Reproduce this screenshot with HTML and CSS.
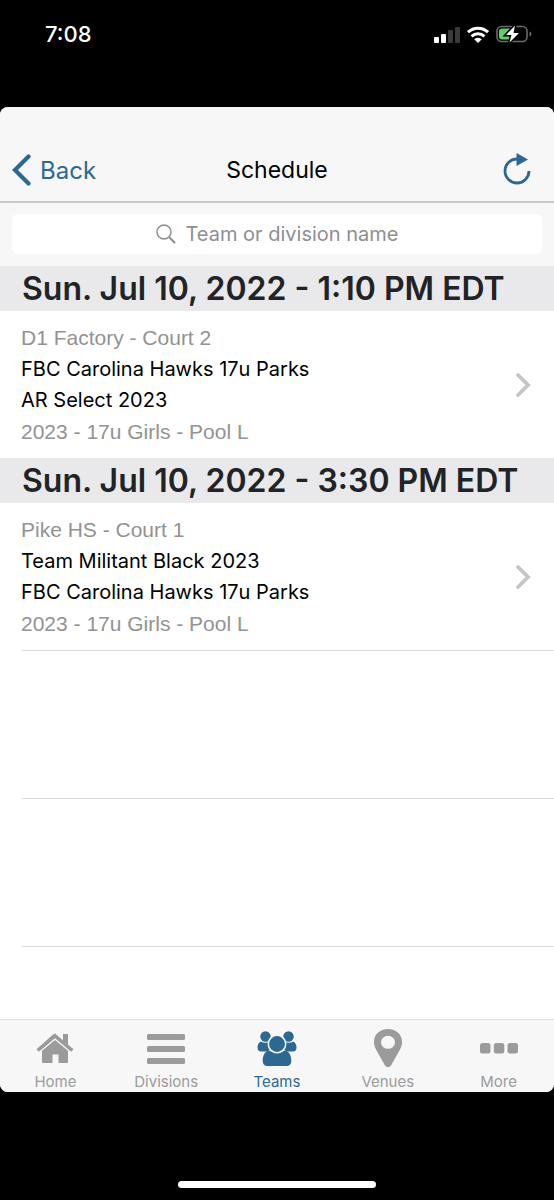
FILE: index.html
```html
<!doctype html>
<html lang="en">
  <head>
    <meta charset="UTF-8" />
    <meta
      name="viewport"
      content="width=device-width, initial-scale=1.0" />
    <title>Schedule</title>
    <link rel="stylesheet" href="styles.css">
  </head>
  <body>
    <!-- Phone status bar -->
    <div class="status-bar">
      <span class="clock">7:08</span>
      <div class="status-icons">
        <svg width="26" height="17" viewBox="0 0 26 17">
          <rect x="0" y="11" width="5" height="6" rx="1" fill="#fff" />
          <rect x="7" y="8" width="5" height="9" rx="1" fill="#fff" />
          <rect x="14" y="4" width="5" height="13" rx="1" fill="#3a3a3a" />
          <rect x="21" y="1" width="5" height="16" rx="1" fill="#3a3a3a" />
        </svg>
        <svg width="22" height="17" viewBox="0 0 22 17">
          <g fill="none" stroke="#fff" stroke-width="3">
            <path d="M1 6.200a14.400 14.400 0 0 1 20 0" />
            <path d="M4.600 10.400a9.200 9.200 0 0 1 12.800 0" />
          </g>
          <path d="M7.200 13.200a5.400 5.400 0 0 1 7.600 0L11 17z" fill="#fff" />
        </svg>
        <svg width="36" height="18" viewBox="0 0 36 18">
          <rect x="1" y="1.500" width="30" height="15" rx="4.500" fill="none" stroke="#6c6c6c" stroke-width="1.600" />
          <path d="M33.500 6.500q2 .7 2 2.500t-2 2.500z" fill="#6c6c6c" />
          <path d="M6 3.500h8v11H6a3 3 0 0 1-3-3v-5a3 3 0 0 1 3-3z" fill="#62cd68" />
          <path d="M19 .5L10 10h5.500L13.500 17.500L23 8h-5.500z" fill="#fff" stroke="#000" stroke-width="3" paint-order="stroke" />
        </svg>
      </div>
    </div>

    <div class="app">
      <header class="nav-bar">
        <a class="back" href="#">
          <svg width="20" height="32" viewBox="0 0 20 32">
            <path d="M16.500 2.500L3 16l13.500 13.500" fill="none" stroke="currentColor" stroke-width="4.200" stroke-linecap="round" />
          </svg>
          Back
        </a>
        <h1>Schedule</h1>
        <button class="refresh" type="button" aria-label="Refresh">
          <svg width="28" height="32" viewBox="0 0 28 32">
            <path d="M14 6A12 12 0 1 0 26 18" fill="none" stroke="currentColor" stroke-width="2.800" />
            <path d="M13.500 0L25 6.500L13.500 13z" fill="currentColor" />
          </svg>
        </button>
      </header>

      <form class="search">
        <label class="search-box">
          <svg width="20" height="20" viewBox="0 0 20 20">
            <circle cx="8" cy="8" r="7" fill="none" stroke="currentColor" stroke-width="1.500" />
            <path d="M13 13l6 6" stroke="currentColor" stroke-width="2" />
          </svg>
          <input type="search" placeholder="Team or division name" aria-label="Team or division name" />
        </label>
      </form>

      <main class="schedule">
        <h2>Sun. Jul 10, 2022 - 1:10 PM EDT</h2>
        <a class="game" href="#">
          <div class="game-info">
            <p class="detail">D1 Factory - Court 2</p>
            <p class="team">FBC Carolina Hawks 17u Parks</p>
            <p class="team">AR Select 2023</p>
            <p class="detail">2023 - 17u Girls - Pool L</p>
          </div>
          <svg width="16" height="26" viewBox="0 0 16 26">
            <path d="M3 3l10 10L3 23" fill="none" stroke="currentColor" stroke-width="3.800" stroke-linecap="round" />
          </svg>
        </a>
        <h2>Sun. Jul 10, 2022 - 3:30 PM EDT</h2>
        <a class="game" href="#">
          <div class="game-info">
            <p class="detail">Pike HS - Court 1</p>
            <p class="team">Team Militant Black 2023</p>
            <p class="team">FBC Carolina Hawks 17u Parks</p>
            <p class="detail">2023 - 17u Girls - Pool L</p>
          </div>
          <svg width="16" height="26" viewBox="0 0 16 26">
            <path d="M3 3l10 10L3 23" fill="none" stroke="currentColor" stroke-width="3.800" stroke-linecap="round" />
          </svg>
        </a>
        <!-- Empty rows -->
        <div class="blank"></div>
        <div class="blank"></div>
        <div class="blank"></div>
      </main>

      <nav class="tab-bar">
        <a href="#">
          <svg width="40" height="40" viewBox="0 0 40 40" fill="currentColor">
            <path d="M20 5.500L38.500 21.200l-2.300 2.600L20 10.200L3.800 23.800l-2.300-2.600L18 6.500q2-1.600 4 0z" />
            <path d="M28 6h5v12l-5-4.300z" />
            <path d="M20 12l13 10.800V34q0 1-1 1h-8.500v-8.500h-6V35H8q-1 0-1-1V22.800z" />
          </svg>
          Home
        </a>
        <a href="#">
          <svg width="40" height="40" viewBox="0 0 40 40" fill="currentColor">
            <rect x="1" y="6" width="38" height="6" rx="1.500" />
            <rect x="1" y="18" width="38" height="6" rx="1.500" />
            <rect x="1" y="30" width="38" height="6" rx="1.500" />
          </svg>
          Divisions
        </a>
        <a class="active" href="#">
          <svg width="40" height="40" viewBox="0 0 40 40" fill="currentColor">
            <circle cx="8.500" cy="8.500" r="5.200" />
            <circle cx="31.500" cy="8.500" r="5.200" />
            <path d="M3.500 13.500c3 1.700 6.500 1.700 9 .2-.2 3 .8 5.800 2.800 7.600-2.200.3-3.800 1-5.200 2.200H4q-3.500 0-3.500-4t3-6z" />
            <path d="M36.500 13.500c-3 1.700-6.500 1.700-9 .2.200 3-.8 5.800-2.800 7.600 2.200.3 3.800 1 5.200 2.200H36q3.500 0 3.500-4t-3-6z" />
            <path d="M12.500 22.500c4.500 3.200 10.500 3.200 15 0 4.500.5 6.800 4.500 6.800 10.500 0 3-2 5-5 5H10.700c-3 0-5-2-5-5 0-6 2.300-10 6.800-10.500z" />
            <circle cx="20" cy="16" r="8.700" stroke="#f7f7f7" stroke-width="1.500" />
          </svg>
          Teams
        </a>
        <a href="#">
          <svg width="40" height="40" viewBox="0 0 40 40" fill="currentColor">
            <path fill-rule="evenodd" d="M20 1C11.800 1 6 6.500 6 14c0 3 .8 5.200 2 7.500l9 16q3 3.500 6 0l9-16c1.200-2.300 2-4.500 2-7.500C34 6.500 28.200 1 20 1zm0 6.800a7 6.500 0 1 1 0 13a7 6.500 0 1 1 0-13z" />
          </svg>
          Venues
        </a>
        <a href="#">
          <svg width="40" height="40" viewBox="0 0 40 40" fill="currentColor">
            <rect x="1" y="15" width="10.500" height="10.500" rx="2.500" />
            <rect x="14.800" y="15" width="10.500" height="10.500" rx="2.500" />
            <rect x="28.500" y="15" width="10.500" height="10.500" rx="2.500" />
          </svg>
          More
        </a>
      </nav>
    </div>

    <div class="home-indicator"></div>
  </body>
</html>
```
FILE: styles.css
```css
* {
  box-sizing: border-box;
}

body {
  margin: 0;
  min-height: 100vh;
  display: flex;
  flex-direction: column;
  background-color: #000;
  font-family: Inter, "Liberation Sans", sans-serif;
}

a {
  color: inherit;
  text-decoration: none;
}

h1,
h2,
p {
  margin: 0;
}

svg {
  display: block;
  flex-shrink: 0;
}

/* Status bar */
.status-bar {
  display: flex;
  justify-content: space-between;
  align-items: center;
  height: 107px;
  padding: 0 22px 39px 45px;
  color: #fff;
}

.clock {
  font-size: 22px;
  font-weight: 500;
}

.status-icons {
  display: flex;
  align-items: center;
  gap: 7px;
}

/* App panel */
.app {
  flex: 1;
  display: flex;
  flex-direction: column;
  border-radius: 8px;
  overflow: hidden;
  background-color: #fff;
}

.nav-bar {
  display: grid;
  grid-template-columns: 1fr auto 1fr;
  align-items: center;
  height: 96px;
  padding: 32px 12px 0;
  background-color: #f7f7f7;
  border-bottom: 2px solid #c8c8c9;
}

.back {
  display: flex;
  align-items: center;
  gap: 8px;
  color: #2d6892;
  font-size: 24px;
}

.nav-bar h1 {
  font-size: 23px;
  font-weight: 400;
}

.refresh {
  justify-self: end;
  padding: 0 11px 2px 0;
  border: none;
  background: none;
  color: #2d6892;
}

/* Search */
.search {
  padding: 11px 12px 12px;
  background-color: #f7f7f7;
}

.search-box {
  display: flex;
  justify-content: center;
  align-items: center;
  gap: 10px;
  height: 40px;
  border-radius: 6px;
  background-color: #fff;
  color: #8e8e93;
}

.search-box input {
  field-sizing: content;
  padding: 0;
  border: none;
  outline: none;
  background: none;
  font-family: inherit;
  font-size: 20px;
  appearance: none;
}

.search-box input::placeholder {
  color: #8e8e93;
}

/* Schedule list */
.schedule {
  flex: 1;
}

.schedule h2 {
  padding-left: 22px;
  background-color: #e9e9eb;
  color: #222326;
  font-size: 32px;
  font-weight: 600;
  line-height: 45px;
  white-space: nowrap;
}

.game {
  display: flex;
  justify-content: space-between;
  align-items: center;
  padding: 11px 23px 10px 21px;
  color: #c5c5c9;
}

.detail {
  color: #929292;
  font-family: "Liberation Sans", Arial, sans-serif;
  font-size: 21px;
  line-height: 32px;
}

.team {
  color: #000;
  font-size: 20px;
  line-height: 31px;
}

.blank {
  height: 148px;
  margin-left: 22px;
  border-top: 1px solid #dcdcde;
}

.blank:last-child {
  height: 73px;
}

/* Tab bar */
.tab-bar {
  display: grid;
  grid-template-columns: repeat(5, 1fr);
  padding: 8px 0 1px;
  background-color: #f7f7f7;
  border-top: 1px solid #e0e0e0;
}

.tab-bar a {
  display: flex;
  flex-direction: column;
  align-items: center;
  gap: 4px;
  color: #9b9b9b;
  font-size: 15px;
  line-height: 19px;
}

.tab-bar .active {
  color: #2d6892;
}

.home-indicator {
  align-self: center;
  width: 198px;
  height: 7px;
  margin: 89px 0 12px;
  border-radius: 4px;
  background-color: #fff;
}
```
